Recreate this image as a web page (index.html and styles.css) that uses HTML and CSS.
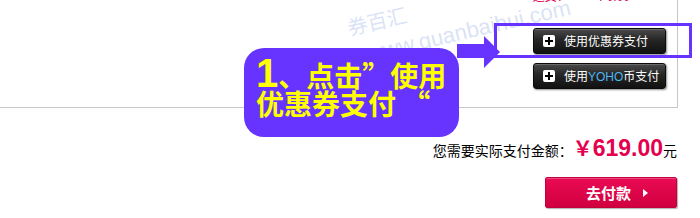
FILE: index.html
```html
<!DOCTYPE html>
<html lang="zh-CN">
<head>
<meta charset="utf-8">
<title>支付</title>
<link rel="stylesheet" href="styles.css">
</head>
<body>
<div class="page">
  <div class="panel">
    <div class="fee-row">
      <span class="fee-label">运费：</span>
      <span class="fee-value">￥0.00</span>
    </div>
    <div class="pay-options">
      <button class="opt-btn"><span class="plus"></span><span>使用优惠券支付</span></button>
      <button class="opt-btn"><span class="plus"></span><span>使用<em class="yoho">YOHO</em>币支付</span></button>
    </div>
  </div>
  <div class="total-row">
    <span class="total-label">您需要实际支付金额：</span>
    <span class="yen">￥</span><span class="amount">619.00</span><span class="unit">元</span>
  </div>
  <div class="submit-row">
    <button class="pay-btn">去付款<span class="tri"></span></button>
  </div>

  <div class="watermark wm-cn">券百汇</div>
  <div class="watermark wm-url">www.quanbaihui.com</div>

  <div class="callout">
    <div class="callout-l1"><span class="num">1</span>、点击”使用</div>
    <div class="callout-l2">优惠券支付 “</div>
  </div>
  <svg class="arrow" width="44" height="34" viewBox="0 0 44 34">
    <polygon points="0,8 27,8 27,0 43,16 27,32 27,22 0,22" fill="#6633ff"/>
  </svg>
  <div class="highlight"></div>
</div>
</body>
</html>
```

FILE: styles.css
```css
* { box-sizing: border-box; }
html, body { margin: 0; padding: 0; background: #fff; }
body {
  width: 700px;
  height: 218px;
  overflow: hidden;
  font-family: "Liberation Sans", "Noto Sans CJK SC", sans-serif;
  color: #000;
}
.page {
  position: relative;
  width: 700px;
  height: 218px;
}
.panel {
  width: 678px;
  height: 108px;
  border-right: 1px solid #c8c8c8;
  border-bottom: 1px solid #c8c8c8;
  display: flex;
  flex-direction: column;
  align-items: flex-end;
}
.fee-row {
  display: flex;
  margin-top: -10px;
  padding-right: 47px;
  font-size: 12px;
  line-height: 14px;
  color: #e5004f;
  gap: 26px;
}
.pay-options {
  margin-top: 24px;
  padding-right: 11px;
  display: flex;
  flex-direction: column;
  gap: 9px;
}
.opt-btn {
  width: 133px;
  height: 26px;
  padding: 0 0 0 9px;
  display: flex;
  align-items: center;
  gap: 9px;
  border: 1px solid #0c0c0c;
  border-radius: 3px;
  background: linear-gradient(#4a4a4a 0%, #262626 45%, #111 100%);
  box-shadow: 1px 1px 2px rgba(0,0,0,0.45), inset 0 1px 0 rgba(255,255,255,0.18);
  color: #fff;
  font-family: "Noto Sans CJK SC", sans-serif;
  font-size: 12px;
  line-height: 14px;
  cursor: pointer;
}
.plus {
  position: relative;
  width: 12px;
  height: 12px;
  background: #fff;
  border-radius: 2px;
  flex: none;
}
.plus::before, .plus::after {
  content: "";
  position: absolute;
  background: #000;
}
.plus::before { left: 2px; top: 5px; width: 8px; height: 2px; }
.plus::after { left: 5px; top: 2px; width: 2px; height: 8px; }
.yoho {
  font-style: normal;
  font-family: "Liberation Sans", sans-serif;
  color: #4cb6f2;
}
.total-row {
  display: flex;
  justify-content: flex-end;
  align-items: baseline;
  padding-right: 23px;
  margin-top: 25px;
  line-height: 30px;
  height: 30px;
}
.total-label {
  font-family: "Noto Sans CJK SC", sans-serif;
  font-size: 14px;
}
.yen {
  font-family: "Noto Sans CJK SC", sans-serif;
  font-weight: bold;
  font-size: 20px;
  color: #e3004f;
}
.amount {
  font-weight: bold;
  font-size: 23px;
  color: #e3004f;
}
.unit {
  font-family: "Noto Sans CJK SC", sans-serif;
  font-size: 14px;
}
.submit-row {
  display: flex;
  justify-content: flex-end;
  padding-right: 23px;
  margin-top: 14px;
}
.pay-btn {
  width: 132px;
  height: 31px;
  display: flex;
  align-items: center;
  justify-content: center;
  gap: 12px;
  padding: 0 0 0 12px;
  border: 1px solid #c2003a;
  border-radius: 2px;
  background: linear-gradient(#ea0a55, #d0003f);
  box-shadow: 1px 1px 1px rgba(0,0,0,0.3), inset 0 1px 0 rgba(255,255,255,0.25);
  color: #fff;
  font-family: "Noto Sans CJK SC", sans-serif;
  font-weight: bold;
  font-size: 15px;
  cursor: pointer;
}
.tri {
  width: 0;
  height: 0;
  border-top: 4px solid transparent;
  border-bottom: 4px solid transparent;
  border-left: 5px solid #fff;
}
.watermark {
  position: absolute;
  color: rgba(170, 190, 235, 0.45);
  transform: rotate(-13deg);
  white-space: nowrap;
  pointer-events: none;
}
.wm-cn {
  left: 347px;
  top: 9px;
  font-family: "Noto Sans CJK SC", sans-serif;
  font-size: 20px;
  line-height: 24px;
}
.wm-url {
  left: 365px;
  top: 18px;
  font-size: 22px;
  line-height: 26px;
}
.callout {
  position: absolute;
  left: 244px;
  top: 48px;
  width: 215px;
  height: 89px;
  padding: 10px 0 0 12px;
  background: #6633ff;
  border-radius: 20px;
  color: #ffff00;
  font-family: "Noto Sans CJK SC", sans-serif;
  font-weight: bold;
  font-size: 28px;
  line-height: 30px;
}
.callout-l1 { white-space: nowrap; }
.callout-l2 { white-space: nowrap; margin-top: -2px; }
.num {
  font-family: "Liberation Sans", sans-serif;
  font-size: 40px;
}
.arrow {
  position: absolute;
  left: 457px;
  top: 36px;
}
.highlight {
  position: absolute;
  left: 494px;
  top: 23px;
  width: 198px;
  height: 35px;
  border: 3px solid #6633ff;
}
```
